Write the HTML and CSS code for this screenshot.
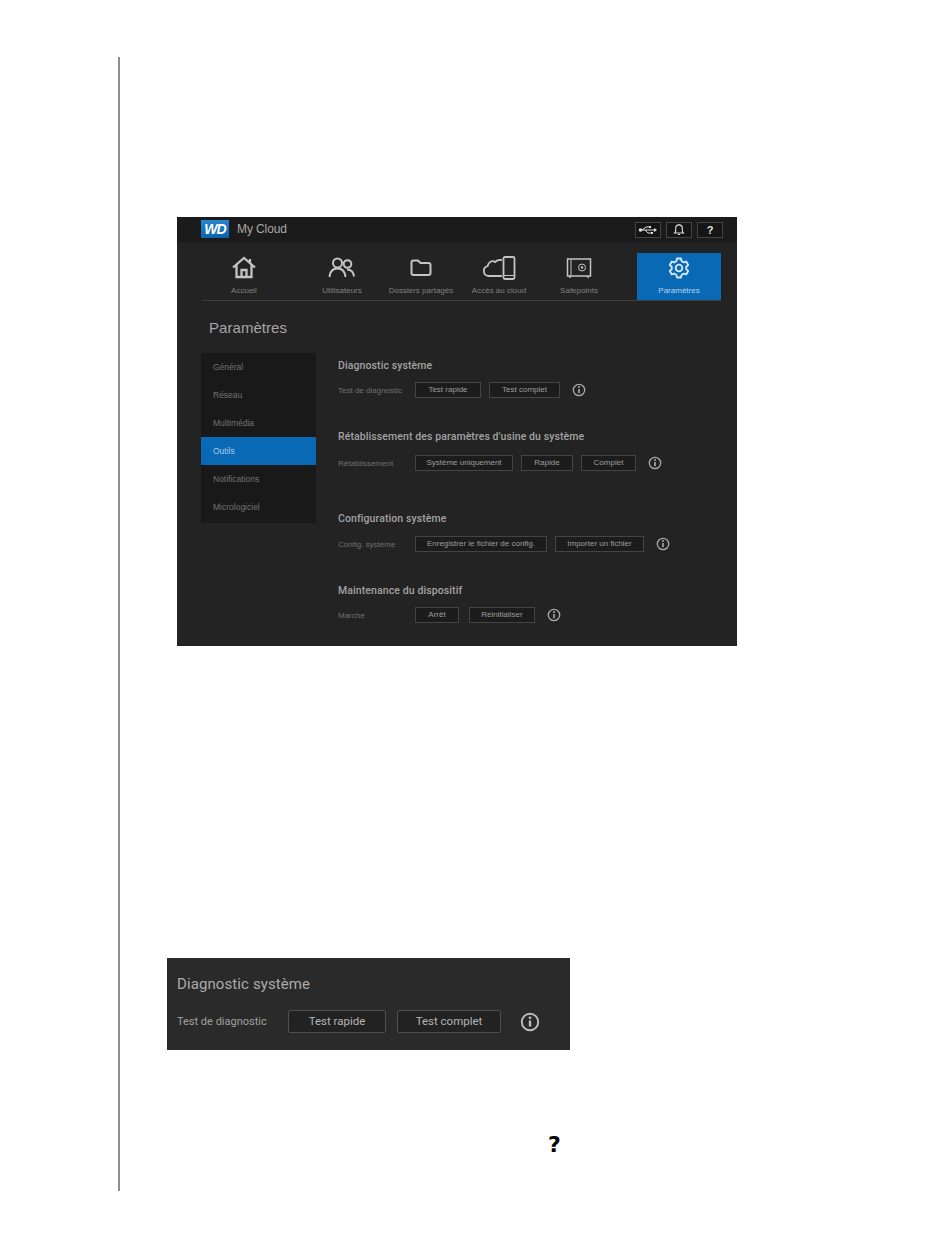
FILE: index.html
```html
<!DOCTYPE html>
<html lang="fr">
<head>
<meta charset="utf-8">
<title>Paramètres</title>
<link rel="stylesheet" href="styles.css">
</head>
<body>
<main class="page">
  <section class="panel">
    <header class="topbar">
      <span class="logo">WD</span>
      <span class="brand">My Cloud</span>
      <div class="tools">
        <span class="tool"><svg width="20" height="10" viewBox="0 0 20 10"><path d="M1 5h17M4 5l4-3h3M7 5l3 3h3" fill="none" stroke="#ddd" stroke-width="1"/><circle cx="2.500" cy="5" r="1.800" fill="#ddd"/><path d="M16 3l3 2-3 2z" fill="#ddd"/><rect x="11" y="1" width="2" height="2" fill="#ddd"/><rect x="13" y="7" width="2" height="2" fill="#ddd"/></svg></span>
        <span class="tool"><svg width="12" height="13" viewBox="0 0 12 13"><path d="M1.500 10h9L9.300 8.300V5.200a3.300 3.300 0 0 0-6.600 0v3.100zM5 11.500h2" fill="none" stroke="#ddd" stroke-width="1.100"/><path d="M6 1v1" stroke="#ddd"/></svg></span>
        <span class="tool tool-help">?</span>
      </div>
    </header>
    <nav class="nav">
      <a class="nav-item nav-home">
        <svg class="nav-icon" width="26" height="24" viewBox="0 0 26 24"><path d="M2 11.500 13 2l11 9.500M5.500 9v12h15V9M10.500 21v-7h5v7M19 3v4" fill="none" stroke="#c4c4c4" stroke-width="2.300"/></svg>
        <span>Accueil</span>
      </a>
      <a class="nav-item nav-users">
        <svg class="nav-icon" width="28" height="24" viewBox="0 0 28 24"><circle cx="9.500" cy="7" r="4.500" fill="none" stroke="#c4c4c4" stroke-width="2"/><path d="M1.500 21c.5-5.500 3.500-8.500 8-8.500s7.500 3 8 8.500" fill="none" stroke="#c4c4c4" stroke-width="2"/><circle cx="19.500" cy="8" r="3.800" fill="none" stroke="#c4c4c4" stroke-width="2"/><path d="M19 13.500c4 0 6.500 2.500 7 7" fill="none" stroke="#c4c4c4" stroke-width="2"/></svg>
        <span>Utilisateurs</span>
      </a>
      <a class="nav-item nav-folders">
        <svg class="nav-icon" width="22" height="24" viewBox="0 0 22 24"><path d="M1.500 6.500q0-2 2-2h4.500l2.500 2.500h8q2 0 2 2v8q0 2-2 2h-15q-2 0-2-2z" fill="none" stroke="#c4c4c4" stroke-width="2"/></svg>
        <span>Dossiers partagés</span>
      </a>
      <a class="nav-item nav-cloud">
        <svg class="nav-icon" width="34" height="24" viewBox="0 0 34 24"><path d="M20 20H6.500a5 5 0 0 1-1-9.800C6.500 6 10 4 13 6c1.500-1.500 4-2.500 7-2" fill="none" stroke="#c4c4c4" stroke-width="1.800"/><rect x="21.500" y="1" width="11" height="22" rx="1.500" fill="none" stroke="#c4c4c4" stroke-width="1.800"/><path d="M22 19.500h10" stroke="#c4c4c4"/></svg>
        <span>Accès au cloud</span>
      </a>
      <a class="nav-item nav-safe">
        <svg class="nav-icon" width="26" height="24" viewBox="0 0 26 24"><rect x="1.500" y="3" width="23" height="17" fill="none" stroke="#c4c4c4" stroke-width="1.500"/><path d="M5 3v17" stroke="#c4c4c4"/><circle cx="16" cy="11.500" r="3.500" fill="none" stroke="#c4c4c4"/><circle cx="16" cy="11.500" r="1.300" fill="#c4c4c4"/><path d="M4 20v2M22 20v2" stroke="#c4c4c4" stroke-width="1.500"/></svg>
        <span>Safepoints</span>
      </a>
      <a class="nav-item nav-settings">
        <svg class="nav-icon" width="24" height="24" viewBox="-1 -1 26 26"><path d="M9.260 4.480 9.820 1.730H14.180L14.740 4.480 17.140 5.870 19.800 4.970 21.990 8.760 19.880 10.610V13.390L21.990 15.240 19.800 19.030 17.140 18.130 14.740 19.520 14.180 22.270H9.820L9.260 19.520 6.860 18.130 4.200 19.030 2.010 15.240 4.120 13.390V10.610L2.010 8.760 4.200 4.970 6.860 5.870Z" fill="none" stroke="#d5e6f4" stroke-width="2" stroke-linejoin="round"/><circle cx="12" cy="12" r="3.600" fill="none" stroke="#d5e6f4" stroke-width="2"/></svg>
        <span>Paramètres</span>
      </a>
    </nav>
    <h1 class="title">Paramètres</h1>
    <div class="body">
      <ul class="side">
        <li>Général</li>
        <li>Réseau</li>
        <li>Multimédia</li>
        <li class="side-active">Outils</li>
        <li>Notifications</li>
        <li>Micrologiciel</li>
      </ul>
      <div class="content">
        <div class="block block-diag">
          <h2>Diagnostic système</h2>
          <div class="row">
            <span class="label">Test de diagnostic</span>
            <span class="btn w66">Test rapide</span>
            <span class="btn w71">Test complet</span>
            <svg class="info" width="14" height="14" viewBox="0 0 14 14"><circle cx="7" cy="7" r="5.700" fill="none" stroke="#aaa" stroke-width="1.300"/><path d="M7 6v4.200" stroke="#aaa" stroke-width="1.600"/><circle cx="7" cy="4" r="1" fill="#aaa"/></svg>
          </div>
        </div>
        <div class="block block-reset">
          <h2>Rétablissement des paramètres d'usine du système</h2>
          <div class="row">
            <span class="label">Rétablissement</span>
            <span class="btn w98">Système uniquement</span>
            <span class="btn w52">Rapide</span>
            <span class="btn w55">Complet</span>
            <svg class="info" width="14" height="14" viewBox="0 0 14 14"><circle cx="7" cy="7" r="5.700" fill="none" stroke="#aaa" stroke-width="1.300"/><path d="M7 6v4.200" stroke="#aaa" stroke-width="1.600"/><circle cx="7" cy="4" r="1" fill="#aaa"/></svg>
          </div>
        </div>
        <div class="block block-config">
          <h2>Configuration système</h2>
          <div class="row">
            <span class="label">Config. système</span>
            <span class="btn w132">Enregistrer le fichier de config.</span>
            <span class="btn w89">Importer un fichier</span>
            <svg class="info" width="14" height="14" viewBox="0 0 14 14"><circle cx="7" cy="7" r="5.700" fill="none" stroke="#aaa" stroke-width="1.300"/><path d="M7 6v4.200" stroke="#aaa" stroke-width="1.600"/><circle cx="7" cy="4" r="1" fill="#aaa"/></svg>
          </div>
        </div>
        <div class="block block-maint">
          <h2>Maintenance du dispositif</h2>
          <div class="row row-wide">
            <span class="label">Marche</span>
            <span class="btn w44">Arrêt</span>
            <span class="btn w66">Réinitialiser</span>
            <svg class="info" width="14" height="14" viewBox="0 0 14 14"><circle cx="7" cy="7" r="5.700" fill="none" stroke="#aaa" stroke-width="1.300"/><path d="M7 6v4.200" stroke="#aaa" stroke-width="1.600"/><circle cx="7" cy="4" r="1" fill="#aaa"/></svg>
          </div>
        </div>
      </div>
    </div>
  </section>
  <section class="detail">
    <h2 class="detail-title">Diagnostic système</h2>
    <div class="detail-row">
      <span class="detail-label">Test de diagnostic</span>
      <span class="detail-btn w98">Test rapide</span>
      <span class="detail-btn w105">Test complet</span>
      <svg class="detail-info" width="20" height="20" viewBox="0 0 20 20"><circle cx="10" cy="10" r="8.200" fill="none" stroke="#bdbdbd" stroke-width="1.900"/><path d="M10 8.500v6" stroke="#bdbdbd" stroke-width="2.400"/><circle cx="10" cy="5.800" r="1.400" fill="#bdbdbd"/></svg>
    </div>
  </section>
  <p class="help-mark">?</p>
</main>
</body>
</html>
```
FILE: styles.css
```css
* {
  box-sizing: border-box;
}

html,
body {
  margin: 0;
  background: #fff;
}

body {
  font-family: "Liberation Sans", Arial, sans-serif;
}

h1,
h2,
p,
ul {
  margin: 0;
  padding: 0;
}

.page {
  margin: 57px 0 0 118px;
  width: 600px;
  height: 1134px;
  border-left: 2px solid #8f8f8f;
  padding-top: 160px;
}

/* Main screenshot */
.panel {
  width: 560px;
  height: 429px;
  margin-left: 57px;
  background: #232323;
  overflow: hidden;
}

.topbar {
  display: flex;
  align-items: center;
  height: 25px;
  padding: 0 14px 0 24px;
  background: #1b1b1b;
}

.logo {
  width: 28px;
  height: 18px;
  margin-top: -1px;
  background: linear-gradient(#2a86cf, #0a62ad);
  color: #fff;
  font-size: 14px;
  font-weight: 700;
  font-style: italic;
  line-height: 18px;
  text-align: center;
  letter-spacing: -1px;
}

.brand {
  margin: -2px 0 0 8px;
  color: #a8a8a8;
  font-size: 12px;
  letter-spacing: -.1px;
}

.tools {
  display: flex;
  gap: 5px;
  margin-left: auto;
}

.tool {
  display: flex;
  align-items: center;
  justify-content: center;
  width: 26px;
  height: 16px;
  background: #151515;
  border: 1px solid #444;
}

.tool-help {
  color: #e0e0e0;
  font-size: 11px;
  font-weight: 700;
}

.nav {
  display: flex;
  width: 519px;
  height: 48px;
  margin: 11px 0 0 25px;
  border-bottom: 1px solid #3f3f3f;
}

.nav-item {
  display: flex;
  flex-direction: column;
  align-items: center;
  flex: none;
  width: 78px;
  height: 47px;
  padding-top: 3px;
  color: #808080;
  font-size: 8px;
  white-space: nowrap;
}

.nav-icon {
  height: 24px;
  margin-bottom: 6px;
}

.nav-home {
  width: 84px;
}

.nav-users {
  margin-left: 17px;
}

.nav-folders {
  margin-left: 1px;
}

.nav-safe {
  margin-left: 2px;
}

.nav-settings {
  width: 84px;
  margin-left: 19px;
  background: #0a69b4;
  color: #b9d4ea;
}

.title {
  margin: 18px 0 0 32px;
  color: #a6a6a6;
  font-size: 15px;
  font-weight: 400;
  line-height: 18px;
  letter-spacing: .05px;
}

.body {
  display: flex;
  align-items: flex-start;
  margin: 16px 0 0 24px;
}

.side {
  flex: none;
  width: 115px;
  padding-bottom: 2px;
  list-style: none;
  background: #191919;
}

.side li {
  height: 28px;
  padding-left: 12px;
  color: #737373;
  font-size: 8.500px;
  line-height: 28px;
}

.side .side-active {
  background: #0a69b4;
  color: #a8cbe6;
}

.content {
  margin-left: 22px;
}

.block h2 {
  color: #a2a2a2;
  font-family: Roboto, "Liberation Sans", sans-serif;
  font-size: 10.500px;
  font-weight: 500;
  line-height: 14px;
  letter-spacing: .1px;
}

.block-diag {
  margin-top: 6px;
}

.block-diag h2 {
  margin-bottom: 9px;
}

.block-reset {
  margin-top: 32px;
}

.block-reset h2 {
  margin-bottom: 11px;
}

.block-config {
  margin-top: 41px;
}

.block-config h2 {
  margin-bottom: 10px;
}

.block-maint {
  margin-top: 32px;
}

.block-maint h2 {
  margin-bottom: 9px;
}

.row {
  display: flex;
  align-items: center;
  gap: 8px;
  height: 16px;
}

.row-wide {
  gap: 10px;
}

.label {
  flex: none;
  width: 69px;
  color: #707070;
  font-size: 8px;
  white-space: nowrap;
}

.row-wide .label {
  width: 67px;
}

.btn {
  flex: none;
  height: 16px;
  background: #1c1c1c;
  border: 1px solid #444;
  color: #9c9c9c;
  font-size: 8px;
  line-height: 14px;
  text-align: center;
  white-space: nowrap;
}

.w44 { width: 44px; }
.w52 { width: 52px; }
.w55 { width: 55px; }
.w66 { width: 66px; }
.w71 { width: 71px; }
.w89 { width: 89px; }
.w98 { width: 98px; }
.w105 { width: 104px; }
.w132 { width: 132px; }

.info {
  flex: none;
  margin-left: 4px;
}

.row-wide .info {
  margin-left: 2px;
}

/* Detail crop */
.detail {
  width: 403px;
  height: 92px;
  margin: 312px 0 0 47px;
  padding: 18px 0 0 10px;
  background: #2a2a2a;
}

.detail-title {
  color: #ababab;
  font-family: Roboto, "Liberation Sans", sans-serif;
  font-size: 15px;
  font-weight: 400;
  line-height: 17px;
  letter-spacing: .1px;
}

.detail-row {
  display: flex;
  align-items: center;
  margin-top: 17px;
  height: 23px;
}

.detail-label {
  flex: none;
  width: 111px;
  color: #a0a0a0;
  font-family: Roboto, "Liberation Sans", sans-serif;
  font-size: 11px;
  white-space: nowrap;
}

.detail-btn {
  flex: none;
  height: 23px;
  margin-right: 11px;
  background: #222;
  border: 1px solid #4f4f4f;
  border-radius: 2px;
  color: #b4b4b4;
  font-family: Roboto, "Liberation Sans", sans-serif;
  font-size: 11.500px;
  line-height: 21px;
  text-align: center;
}

.detail-info {
  flex: none;
  margin-left: 8px;
}

.help-mark {
  margin: 84px 0 0 428px;
  color: #000;
  font-family: "DejaVu Sans", sans-serif;
  font-size: 22px;
  font-weight: 700;
  line-height: 22px;
}
```
